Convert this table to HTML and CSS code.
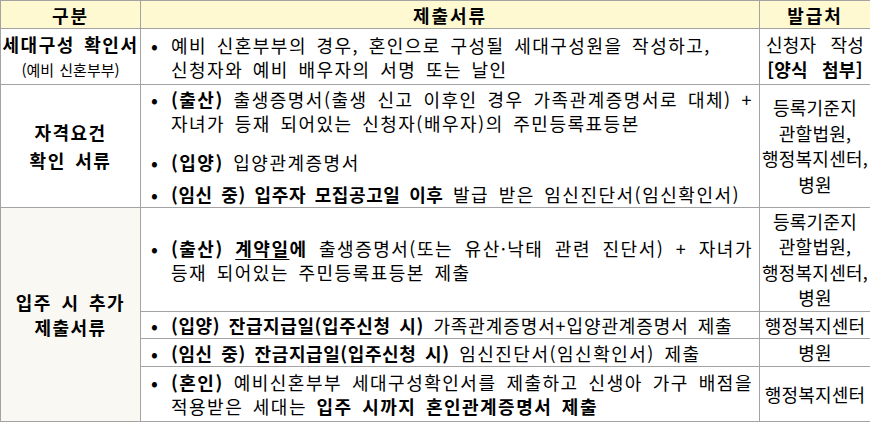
FILE: index.html
```html
<!DOCTYPE html>
<html lang="ko">
<head>
<meta charset="utf-8">
<link rel="stylesheet" href="styles.css">
</head>
<body>
<table class="docs">
  <colgroup><col class="c1"><col class="c2"><col class="c3"></colgroup>
  <thead>
    <tr class="hd"><th>구분</th><th>제출서류</th><th>발급처</th></tr>
  </thead>
  <tbody>
    <tr class="r1">
      <td class="lab"><div class="lt">세대구성 확인서</div><div class="sub">(예비 신혼부부)</div></td>
      <td class="mid">
        <div class="item"><span class="bul">•</span><div class="tx">
          <span class="ln">예비 신혼부부의 경우, 혼인으로 구성될 세대구성원을 작성하고,</span>
          <span class="ln">신청자와 예비 배우자의 서명 또는 날인</span>
        </div></div>
      </td>
      <td class="iss">신청자 작성<br><b>[양식 첨부]</b></td>
    </tr>
    <tr class="r2">
      <td class="lab lab2">자격요건<br>확인 서류</td>
      <td class="mid">
        <div class="item"><span class="bul">•</span><div class="tx">
          <span class="ln j"><b>(출산)</b> 출생증명서(출생 신고 이후인 경우 가족관계증명서로 대체) +</span>
          <span class="ln">자녀가 등재 되어있는 신청자(배우자)의 주민등록표등본</span>
        </div></div>
        <div class="item gap1"><span class="bul">•</span><div class="tx">
          <span class="ln"><b>(입양)</b> 입양관계증명서</span>
        </div></div>
        <div class="item gap2"><span class="bul">•</span><div class="tx">
          <span class="ln"><b class="tight">(임신 중) 입주자 모집공고일 이후</b> 발급 받은 임신진단서(임신확인서)</span>
        </div></div>
      </td>
      <td class="iss iss4">등록기준지<br>관할법원,<br>행정복지센터,<br>병원</td>
    </tr>
    <tr class="r3a">
      <td class="lab lab3" rowspan="4">입주 시 추가<br>제출서류</td>
      <td class="mid">
        <div class="item"><span class="bul">•</span><div class="tx">
          <span class="ln j"><b>(출산)</b> <b><u>계약일</u>에</b> 출생증명서(또는 유산·낙태 관련 진단서) + 자녀가</span>
          <span class="ln">등재 되어있는 주민등록표등본 제출</span>
        </div></div>
      </td>
      <td class="iss iss4">등록기준지<br>관할법원,<br>행정복지센터,<br>병원</td>
    </tr>
    <tr class="r3b">
      <td class="mid">
        <div class="item"><span class="bul">•</span><div class="tx">
          <span class="ln"><b class="tight">(입양) 잔급지급일(입주신청 시)</b> <span class="snug">가족관계증명서+입양관계증명서 제출</span></span>
        </div></div>
      </td>
      <td class="iss">행정복지센터</td>
    </tr>
    <tr class="r3c">
      <td class="mid">
        <div class="item"><span class="bul">•</span><div class="tx">
          <span class="ln"><b class="tight">(임신 중) 잔금지급일(입주신청 시)</b> 임신진단서(임신확인서) 제출</span>
        </div></div>
      </td>
      <td class="iss">병원</td>
    </tr>
    <tr class="r3d">
      <td class="mid">
        <div class="item"><span class="bul">•</span><div class="tx">
          <span class="ln j"><b>(혼인)</b> 예비신혼부부 세대구성확인서를 제출하고 신생아 가구 배점을</span>
          <span class="ln">적용받은 세대는 <b>입주 시까지 혼인관계증명서 제출</b></span>
        </div></div>
      </td>
      <td class="iss">행정복지센터</td>
    </tr>
  </tbody>
</table>
</body>
</html>
```

FILE: styles.css
```css
html, body {
  margin: 0;
  padding: 0;
  background: #ffffff;
}
body {
  font-family: "Noto Sans CJK KR", "Noto Sans", sans-serif;
  font-size: 18px;
  color: #000;
  letter-spacing: 1.5px;
  word-spacing: 3px;
}
.docs {
  border-collapse: collapse;
  table-layout: fixed;
  width: 870px;
}
.c1 { width: 140px; }
.c2 { width: 619px; }
.c3 { width: 111px; }
.docs th, .docs td {
  border: 1px solid #a3a3a3;
  padding: 0;
  vertical-align: middle;
}
.hd th {
  background: #fff9d2;
  height: 27px;
  font-weight: 700;
  letter-spacing: 2px;
  line-height: 20px;
  text-align: center;
}
.lab {
  text-align: center;
  font-weight: 700;
  line-height: 25px;
}
.lab .sub {
  font-weight: 400;
  font-size: 15px;
  letter-spacing: 0;
  word-spacing: 1px;
}
.lab2 { line-height: 28px; }
.lab3 { background: #f9f8f3; }
.r1 td { height: 55px; }
.r2 td { height: 122px; }
.r3a td { height: 103px; }
.r3b td { height: 26px; }
.r3c td { height: 27px; }
.r3d td { height: 54px; }
.mid {
  padding: 0 6px 0 10px !important;
}
.item {
  display: flex;
  align-items: flex-start;
  line-height: 24px;
}
.gap1 { margin-top: 15px; }
.gap2 { margin-top: 8px; }
.bul {
  flex: 0 0 20px;
  width: 20px;
  font-weight: 700;
}
.tx { flex: 1; min-width: 0; }
.ln { display: block; white-space: nowrap; }
.ln.j {
  white-space: normal;
  text-align: justify;
  text-align-last: justify;
}
.tight { letter-spacing: 0.6px; }
.snug { letter-spacing: 0.9px; }
u {
  text-decoration-thickness: 1px;
  text-underline-offset: 3px;
}
.iss {
  text-align: center;
  line-height: 25px;
  letter-spacing: 0.2px;
  word-spacing: 9px;
}
.iss4 { line-height: 25.5px; }
```
